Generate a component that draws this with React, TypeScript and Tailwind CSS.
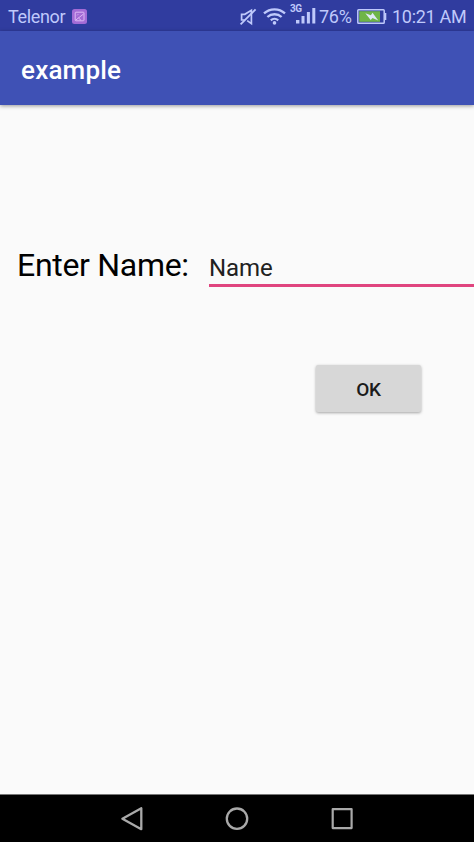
import { useState } from 'react';

function StatusBar() {
  return (
    <div className="flex h-[31px] items-center bg-[#303c9f] pl-2 text-[18px] leading-[31px] text-[#bfc9fb]">
      <span className="w-16 pt-px tracking-[-0.35px] whitespace-nowrap">Telenor</span>
      {/* Screenshot notification */}
      <svg className="mt-px size-[15px] shrink-0" viewBox="0 0 15 15" fill="none">
        <rect width="15" height="15" rx="2.5" fill="#a36bd6" />
        <rect x="3.2" y="3.2" width="8.8" height="8.6" rx="0.8" stroke="#dcb8f5" />
        <path d="M3.5 11.3 11.5 5M6.5 9l2.5 2.3M5.2 6.3l1-1" stroke="#dcb8f5" />
      </svg>

      {/* Muted speaker */}
      <svg className="mt-0.5 ml-[152px] h-[18px] w-[18px] shrink-0" viewBox="0 0 18 18" fill="none" stroke="#bfc9fb" strokeWidth="1.7">
        <path d="M5.6 12H2.6V6.3h3.2L12.4 2.2V15.6L8.2 12.6" />
        <path d="M1.6 16.4 16.6 1.4" strokeWidth="1.9" />
      </svg>
      {/* Wifi */}
      <svg className="mt-px ml-[6px] h-[18px] w-[23px] shrink-0" viewBox="0 0 23 18" fill="none" stroke="#bfc9fb" strokeWidth="2.3">
        <path d="M1 6.4a15.5 15.5 0 0 1 21 0" />
        <path d="M4.4 10a10.5 10.5 0 0 1 14.2 0" />
        <path d="M7.8 13.3a5.6 5.6 0 0 1 7.4 0" />
        <circle cx="11.5" cy="15.9" r="1.8" fill="#bfc9fb" stroke="none" />
      </svg>
      {/* Mobile signal */}
      <div className="relative ml-[4px] h-[31px] w-[26px] shrink-0">
        <span className="absolute top-[3px] left-0 text-[10px] leading-[12px] font-bold tracking-[-0.4px]">3G</span>
        <svg className="absolute top-[7px] left-[6px] h-[17px] w-5" viewBox="0 0 20 17" fill="#bfc9fb">
          <rect x="0" y="13" width="3.4" height="3.5" />
          <rect x="5.5" y="9" width="3" height="7.5" />
          <rect x="10.9" y="5" width="3" height="11.5" />
          <rect x="16.3" y="1" width="3" height="15.5" />
        </svg>
      </div>
      <span className="ml-[3px] w-[38px] pt-px tracking-[-0.3px] whitespace-nowrap">76%</span>
      {/* Charging battery */}
      <svg className="mt-px h-[15px] w-[30px] shrink-0" viewBox="0 0 30 15" fill="none">
        <rect x="0.8" y="0.8" width="26.4" height="13.4" rx="0.8" stroke="#bfc9fb" strokeWidth="1.5" />
        <rect x="2.2" y="2.2" width="20.8" height="10.6" fill="#6fb548" />
        <path d="M28.5 4v7" stroke="#bfc9fb" strokeWidth="1.6" />
        <path d="m8.3 4.2 5.6 2L15.5 3.8l5.8 7.8-5.8-2.6-1.8 2z" fill="#dfe9f7" />
      </svg>
      <span className="ml-[5px] pt-px tracking-[-0.3px] whitespace-nowrap">10:21 AM</span>
    </div>
  );
}

function NavigationBar() {
  return (
    <nav className="flex h-12 items-center justify-center gap-[81px] border-t border-[#777] bg-black text-[#a9a9a9]">
      <button aria-label="Back">
        <svg className="size-6" viewBox="0 0 24 24" fill="none" stroke="currentColor" strokeWidth="2.3" strokeLinejoin="round">
          <path d="M21.3 1.2v21L2.4 11.7z" />
        </svg>
      </button>
      <button aria-label="Home">
        <svg className="size-6" viewBox="0 0 24 24" fill="none" stroke="currentColor" strokeWidth="2.3">
          <circle cx="12" cy="11.7" r="10.2" />
        </svg>
      </button>
      <button aria-label="Recents">
        <svg className="size-6" viewBox="0 0 24 24" fill="none" stroke="currentColor" strokeWidth="2.2" strokeLinejoin="round">
          <rect x="2.7" y="2.2" width="18.9" height="18.9" />
        </svg>
      </button>
    </nav>
  );
}

export default function App() {
  const [name, setName] = useState('Name');

  return (
    <div className="flex h-[842px] w-[474px] flex-col overflow-hidden bg-[#fafafa] font-[Roboto,sans-serif]">
      <StatusBar />
      <header className="flex h-[74px] shrink-0 items-center bg-[#3f51b5] pl-[21px] shadow-[0_1px_4px_rgba(0,0,0,0.4)]">
        <h1 className="pt-1 text-[26px] leading-8 font-medium tracking-[0.2px] text-white">example</h1>
      </header>

      <main className="flex-1">
        <div className="mt-[140px] flex items-start pl-[17px]">
          <label htmlFor="name" className="w-[192px] shrink-0 text-[32px] leading-10 tracking-[-0.3px] whitespace-nowrap text-black">
            Enter Name:
          </label>
          <input
            id="name"
            value={name}
            onChange={(e) => setName(e.target.value)}
            className="h-[42px] w-[265px] shrink-0 border-b-[3px] border-[#e0457f] pt-[6px] text-[24px] tracking-[-0.1px] text-[#212121] outline-none"
          />
        </div>
        <button className="mt-[78px] ml-[316px] flex h-[47px] w-[105px] items-center justify-center rounded-[2px] bg-[#d7d7d7] pt-[3px] text-[19px] font-medium tracking-[-0.2px] text-[#1b1b1b] shadow-[0_1px_3px_rgba(0,0,0,0.35)]">
          OK
        </button>
      </main>

      <NavigationBar />
    </div>
  );
}
